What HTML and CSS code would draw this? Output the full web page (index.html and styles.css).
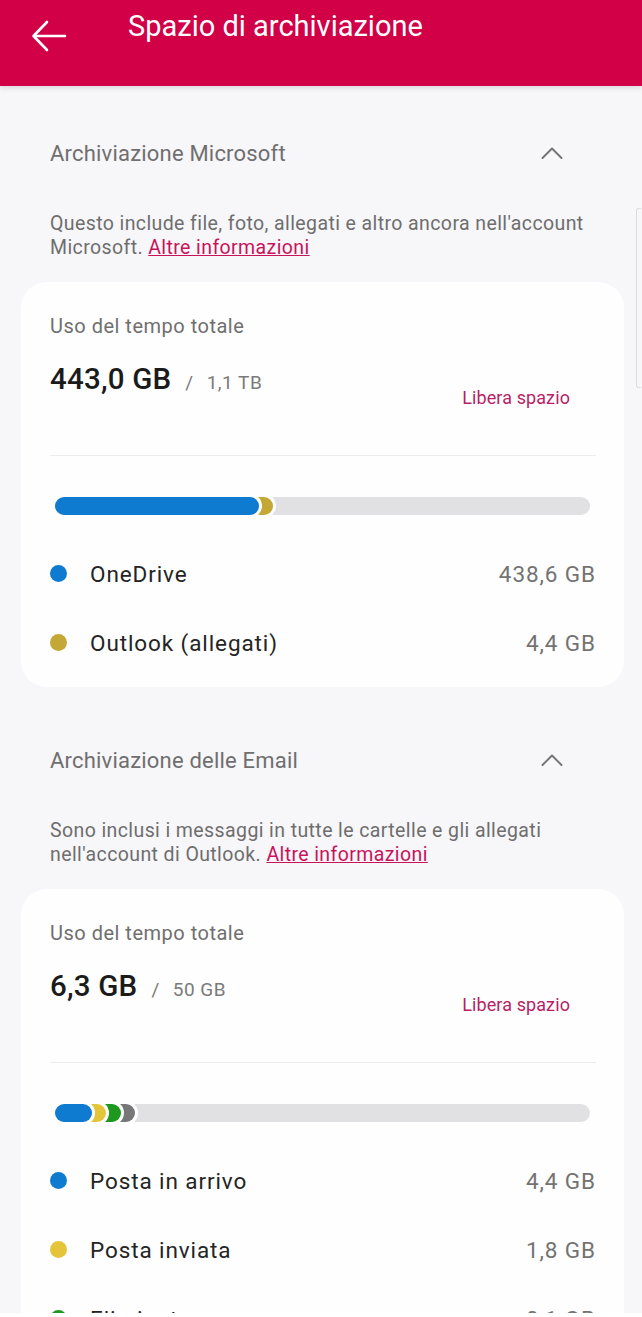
FILE: index.html
```html
<!DOCTYPE html>
<html lang="it">
<head>
  <meta charset="UTF-8" />
  <title>Spazio di archiviazione</title>
  <link rel="stylesheet" href="styles.css">
</head>
<body>
  <div class="screen">
    <header class="topbar">
      <svg class="back" width="36" height="32" viewBox="0 0 36 32">
        <path d="M34 16H3M16 2L2.5 16L16 30" fill="none" stroke="#fff" stroke-width="2.6" stroke-linecap="round" stroke-linejoin="round"/>
      </svg>
      <h1>Spazio di archiviazione</h1>
    </header>

    <div class="scroll-thumb"></div>

    <section class="section first">
      <div class="sec-head">
        <span>Archiviazione Microsoft</span>
        <svg class="chev" width="22" height="12" viewBox="0 0 22 12">
          <path d="M1.5 11L11 1.5L20.5 11" fill="none" stroke="#737373" stroke-width="1.9" stroke-linecap="round" stroke-linejoin="round"/>
        </svg>
      </div>
      <p class="desc">Questo include file, foto, allegati e altro ancora nell'account Microsoft. <a href="#">Altre informazioni</a></p>

      <div class="card">
        <div class="label">Uso del tempo totale</div>
        <div class="summary">
          <div class="amount"><strong>443,0 GB</strong><span class="slash">/</span><span class="quota">1,1 TB</span></div>
          <a class="free" href="#">Libera spazio</a>
        </div>
        <div class="divider"></div>
        <div class="bar">
          <span class="seg blue" style="width:204px"></span>
          <span class="seg gold" style="width:24px"></span>
          <span class="seg track"></span>
        </div>
        <div class="row"><span class="dot blue"></span><span class="name">OneDrive</span><span class="size">438,6 GB</span></div>
        <div class="row"><span class="dot gold"></span><span class="name">Outlook (allegati)</span><span class="size">4,4 GB</span></div>
      </div>
    </section>

    <section class="section">
      <div class="sec-head">
        <span>Archiviazione delle Email</span>
        <svg class="chev" width="22" height="12" viewBox="0 0 22 12">
          <path d="M1.5 11L11 1.5L20.5 11" fill="none" stroke="#737373" stroke-width="1.9" stroke-linecap="round" stroke-linejoin="round"/>
        </svg>
      </div>
      <p class="desc">Sono inclusi i messaggi in tutte le cartelle e gli allegati nell'account di Outlook. <a href="#">Altre informazioni</a></p>

      <div class="card">
        <div class="label">Uso del tempo totale</div>
        <div class="summary">
          <div class="amount"><strong>6,3 GB</strong><span class="slash">/</span><span class="quota">50 GB</span></div>
          <a class="free" href="#">Libera spazio</a>
        </div>
        <div class="divider"></div>
        <div class="bar">
          <span class="seg blue" style="width:37px"></span>
          <span class="seg yellow" style="width:24px"></span>
          <span class="seg green" style="width:25px"></span>
          <span class="seg grey" style="width:24px"></span>
          <span class="seg track"></span>
        </div>
        <div class="row"><span class="dot blue"></span><span class="name">Posta in arrivo</span><span class="size">4,4 GB</span></div>
        <div class="row"><span class="dot yellow"></span><span class="name">Posta inviata</span><span class="size">1,8 GB</span></div>
        <div class="row"><span class="dot green"></span><span class="name">Eliminata</span><span class="size">&lt;0,1 GB</span></div>
      </div>
    </section>
  </div>
</body>
</html>
```

FILE: styles.css
```css
html {
  background: #fff;
}
body {
  margin: 0;
  font-family: Roboto, "Noto Sans", sans-serif;
}
.screen {
  position: relative;
  height: 1313px;
  overflow: hidden;
  background: #f7f6f9;
}
.topbar {
  height: 86px;
  background: #d20046;
  display: flex;
  align-items: flex-start;
  box-shadow: 0 2px 5px rgba(0,0,0,0.12);
}
.back {
  margin: 20px 0 0 31px;
}
.topbar h1 {
  margin: 8px 0 0 61px;
  font-size: 29px;
  font-weight: 400;
  line-height: 36px;
  color: #fff;
}
.scroll-thumb {
  position: absolute;
  right: 1px;
  top: 208px;
  width: 4px;
  height: 178px;
  border: 1px solid #dcdbe0;
  border-right: 0;
  border-radius: 3px 0 0 3px;
}
.section {
  padding-top: 59px;
}
.section.first {
  padding-top: 53px;
}
.sec-head {
  display: flex;
  justify-content: space-between;
  align-items: center;
  height: 28px;
  padding: 0 79px 0 50px;
  font-size: 22px;
  letter-spacing: 0.2px;
  color: #6f6f6f;
}
.desc {
  margin: 45px 40px 22px 50px;
  font-size: 19.5px;
  letter-spacing: 0.4px;
  line-height: 24px;
  color: #6e6e6e;
}
.desc a {
  color: #c8135b;
}
.card {
  margin: 0 18px 0 21px;
  background: #fefefe;
  border-radius: 26px;
  padding: 32px 28px 10px 29px;
}
.label {
  font-size: 20px;
  letter-spacing: 0.5px;
  line-height: 24px;
  color: #6f6f6f;
}
.summary {
  display: flex;
  justify-content: space-between;
  align-items: flex-start;
  margin-top: 23px;
}
.amount {
  line-height: 36px;
  color: #7a7a7a;
  font-size: 19px;
  letter-spacing: 0.5px;
}
.amount strong {
  font-size: 29.5px;
  font-weight: 500;
  letter-spacing: 0.2px;
  color: #1b1b1b;
}
.slash {
  margin: 0 13px 0 14px;
}
.free {
  margin: 26px 26px 0 0;
  font-size: 18px;
  letter-spacing: 0.1px;
  line-height: 22px;
  color: #b81e66;
  text-decoration: none;
}
.divider {
  height: 1px;
  background: #ececee;
  margin-top: 46px;
}
.bar {
  display: flex;
  height: 18px;
  margin: 41px 6px 24px 5px;
}
.seg {
  position: relative;
  height: 18px;
  border-radius: 9px;
  box-shadow: 0 0 0 3px #fefefe;
  margin-left: -10px;
}
.seg:first-child {
  margin-left: 0;
  z-index: 5;
}
.seg:nth-child(2) { z-index: 4; }
.seg:nth-child(3) { z-index: 3; }
.seg:nth-child(4) { z-index: 2; }
.seg:nth-child(5) { z-index: 1; }
.seg.track {
  flex: 1;
  background: #e1e1e4;
  box-shadow: none;
  z-index: 0;
}
.blue { background: #0f7bd0; }
.gold { background: #c4a835; }
.yellow { background: #e4c53a; }
.green { background: #1f981f; }
.grey { background: #777; }
.row {
  display: flex;
  align-items: center;
  height: 69px;
  font-size: 22.5px;
  letter-spacing: 0.9px;
}
.dot {
  width: 17px;
  height: 17px;
  border-radius: 50%;
  margin-right: 23px;
}
.name {
  flex: 1;
  color: #242424;
}
.size {
  color: #737373;
}
```
